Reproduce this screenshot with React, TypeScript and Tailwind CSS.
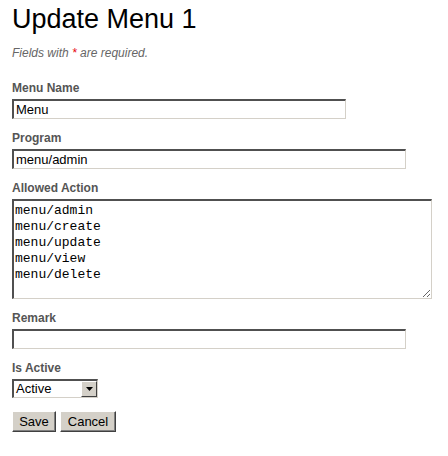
const inset =
  'border-t-2 border-l-2 border-r border-b border-t-[#505050] border-l-[#505050] border-r-[#d4d0c8] border-b-[#d4d0c8] bg-white';

const Label = ({ children }: { children: React.ReactNode }) => (
  <label className="block text-[12px] leading-[15px] font-bold text-[#555]">{children}</label>
);

const Field = ({ label, value, width }: { label: string; value: string; width: string }) => (
  <div className="mb-3">
    <Label>{label}</Label>
    <input
      readOnly
      defaultValue={value}
      className={`mt-[3px] block h-[20px] px-[2px] text-[13px] text-black outline-none ${inset} ${width}`}
    />
  </div>
);

export default function App() {
  return (
    <div className="px-3 pt-1 bg-white min-h-[456px] font-['Liberation_Sans',Arial,sans-serif]">
      <h1 className="text-[27px] leading-[30px] text-black font-normal">Update Menu 1</h1>
      <p className="mt-3 text-[12px] leading-[15px] italic text-[#666]">
        Fields with <span className="text-red-600">*</span> are required.
      </p>

      <div className="mt-[20px]">
        <Field label="Menu Name" value="Menu" width="w-[334px]" />
        <Field label="Program" value="menu/admin" width="w-[394px]" />

        <div className="mb-3">
          <Label>Allowed Action</Label>
          <textarea
            readOnly
            defaultValue={'menu/admin\nmenu/create\nmenu/update\nmenu/view\nmenu/delete'}
            className={`mt-[3px] block w-[420px] h-[100px] px-[1px] pt-[2px] text-[13px] leading-[16px] text-black outline-none font-['Liberation_Mono','Courier_New',monospace] ${inset}`}
          />
        </div>

        <Field label="Remark" value="" width="w-[394px]" />

        <div>
          <Label>Is Active</Label>
          <div className={`mt-[3px] flex items-stretch w-[86px] h-[19px] ${inset}`}>
            <span className="flex-1 pl-[2px] text-[13px] leading-[16px] text-black">Active</span>
            <span className="w-[16px] flex items-center justify-center bg-[#d4d0c8] border border-t-white border-l-white border-r-[#404040] border-b-[#404040]">
              <svg width="7" height="4" viewBox="0 0 7 4">
                <path d="M0 0h7L3.5 4z" fill="#000" />
              </svg>
            </span>
          </div>
        </div>

        <div className="mt-[13px] flex gap-1">
          <button className="w-[44px] h-[21px] text-[13px] text-black bg-[#d4d0c8] border border-t-white border-l-white border-r-[#404040] border-b-[#404040] shadow-[inset_-1px_-1px_0_#808080]">
            Save
          </button>
          <button className="w-[56px] h-[21px] text-[13px] text-black bg-[#d4d0c8] border border-t-white border-l-white border-r-[#404040] border-b-[#404040] shadow-[inset_-1px_-1px_0_#808080]">
            Cancel
          </button>
        </div>
      </div>
    </div>
  );
}
